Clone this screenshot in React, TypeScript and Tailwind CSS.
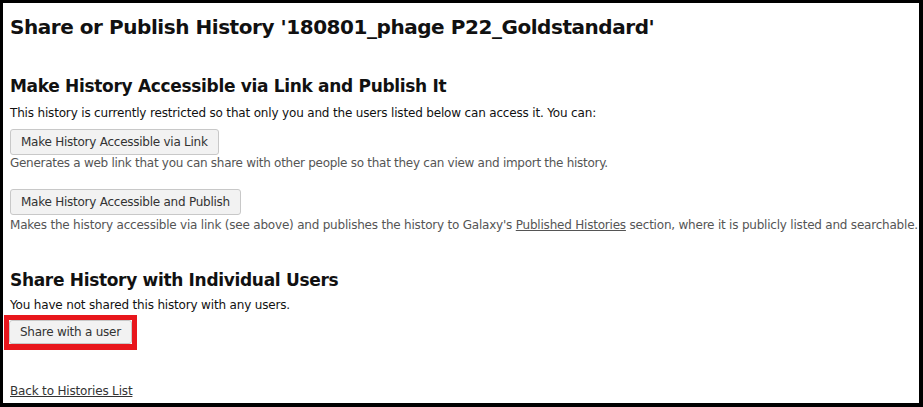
import React from "react";

function Btn({ children, h = "h-[26px]" }: { children: React.ReactNode; h?: string }) {
  return (
    <button
      className={`${h} block rounded-[3px] border border-[#c8c8c8] bg-[#f2f2f2] px-[10px] text-[12px] leading-none tracking-[-0.25px] text-[#333]`}
    >
      {children}
    </button>
  );
}

export default function App() {
  return (
    <div className="box-border h-[407px] w-[923px] overflow-hidden border-t-[3px] border-r-4 border-b-4 border-l-[3px] border-black bg-white pl-[7px] font-['DejaVu_Sans',sans-serif] text-[12px] text-[#111]">
      <h1 className="mt-[12px] text-[20px] leading-[24px] font-bold tracking-[-0.45px]">
        Share or Publish History '180801_phage P22_Goldstandard'
      </h1>
      <h2 className="mt-[36px] text-[17px] leading-[22px] font-bold tracking-[-0.32px]">
        Make History Accessible via Link and Publish It
      </h2>
      <p className="mt-[8px] leading-[16px] tracking-[-0.17px]">
        This history is currently restricted so that only you and the users listed below can access it. You can:
      </p>
      <div className="mt-[8px]">
        <Btn>Make History Accessible via Link</Btn>
      </div>
      <p className="leading-[16px] tracking-[-0.28px] text-[#555]">
        Generates a web link that you can share with other people so that they can view and import the history.
      </p>
      <div className="mt-[18px]">
        <Btn>Make History Accessible and Publish</Btn>
      </div>
      <p className="mt-[2px] leading-[16px] tracking-[-0.21px] whitespace-nowrap text-[#555]">
        Makes the history accessible via link (see above) and publishes the history to Galaxy's{" "}
        <a className="underline">Published Histories</a> section, where it is publicly listed and searchable.
      </p>
      <h2 className="mt-[36px] text-[17px] leading-[22px] font-bold tracking-[-0.32px]">
        Share History with Individual Users
      </h2>
      <p className="mt-[6px] leading-[16px] tracking-[-0.17px]">
        You have not shared this history with any users.
      </p>
      <div className="mt-[2px] ml-[-6px] w-fit border-t-[5px] border-r-[5px] border-b-[6px] border-l-[5px] border-[#e8161c]">
        <Btn h="h-[24px]">Share with a user</Btn>
      </div>
      <p className="mt-[33px] leading-[16px] tracking-[-0.17px]">
        <a className="text-[#333] underline">Back to Histories List</a>
      </p>
    </div>
  );
}
